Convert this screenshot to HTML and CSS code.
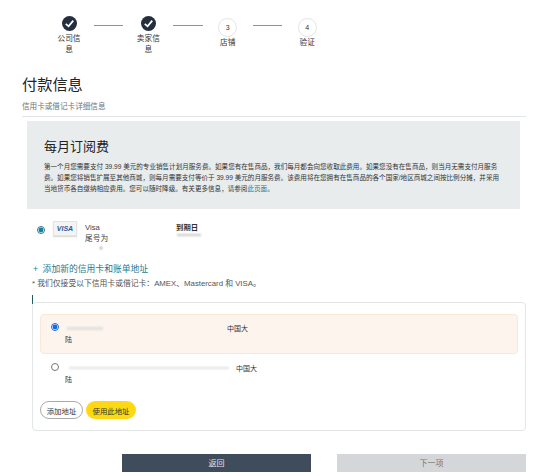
FILE: index.html
```html
<!DOCTYPE html>
<html lang="zh-CN">

<head>
    <meta charset="UTF-8">
    <meta name="viewport" content="width=device-width, initial-scale=1.0">
    <title>付款信息</title>
    <link rel="stylesheet" href="styles.css">
</head>

<body>
    <main class="page">
        <!-- 步骤条 -->
        <ol class="stepper">
            <li class="step">
                <span class="step-dot done">
                    <svg viewBox="0 0 16 16" width="15" height="15" aria-hidden="true"><path d="M4 8.4 7 11l5-6" fill="none" stroke="#fff" stroke-width="1.9"/></svg>
                </span>
                <span class="step-name">公司信息</span>
            </li>
            <li class="step-line"></li>
            <li class="step">
                <span class="step-dot done">
                    <svg viewBox="0 0 16 16" width="15" height="15" aria-hidden="true"><path d="M4 8.4 7 11l5-6" fill="none" stroke="#fff" stroke-width="1.9"/></svg>
                </span>
                <span class="step-name">卖家信息</span>
            </li>
            <li class="step-line"></li>
            <li class="step">
                <span class="step-dot">3</span>
                <span class="step-name">店铺</span>
            </li>
            <li class="step-line"></li>
            <li class="step">
                <span class="step-dot">4</span>
                <span class="step-name">验证</span>
            </li>
        </ol>

        <h1 class="page-title">付款信息</h1>
        <p class="page-sub">信用卡或借记卡详细信息</p>

        <section class="fee-panel">
            <h2>每月订阅费</h2>
            <p>第一个月您需要支付 39.99 美元的专业销售计划月服务费。如果您有在售商品，我们每月都会向您收取此费用。如果您没有在售商品，则当月无需支付月服务费。如果您将销售扩展至其他商城，则每月需要支付等价于 39.99 美元的月服务费。该费用将在您拥有在售商品的各个国家/地区商城之间按比例分摊，并采用当地货币各自缴纳相应费用。您可以随时降级。有关更多信息，请参阅<a href="#">此页面</a>。</p>
        </section>

        <div class="card-row">
            <input class="card-radio" type="radio" name="card" checked>
            <span class="visa-badge">VISA</span>
            <div class="card-name">Visa<br>尾号为<i class="smudge smudge-dot"></i></div>
            <div class="card-exp"><b>到期日</b><i class="smudge smudge-exp"></i></div>
        </div>

        <a class="add-card" href="#">+ 添加新的信用卡和账单地址</a>
        <p class="card-note">* 我们仅接受以下信用卡或借记卡：AMEX、Mastercard 和 VISA。</p>
        <div class="cursor-tick"></div>

        <section class="address-box">
            <label class="address selected">
                <input type="radio" name="addr" checked>
                <span class="address-text"><i class="smudge smudge-a"></i><span class="gap-a">中国大</span><br>陆</span>
            </label>
            <label class="address">
                <input type="radio" name="addr">
                <span class="address-text"><i class="smudge smudge-b"></i><span class="gap-b">中国大</span><br>陆</span>
            </label>
            <div class="address-actions">
                <button class="btn-outline">添加地址</button>
                <button class="btn-yellow">使用此地址</button>
            </div>
        </section>

        <div class="footer-btns">
            <button class="btn-back">返回</button>
            <button class="btn-next">下一项</button>
        </div>
    </main>
</body>

</html>
```

FILE: styles.css
```css
* {
    margin: 0;
    padding: 0;
    box-sizing: border-box;
    font-family: 'Liberation Sans', 'Noto Sans CJK SC', sans-serif;
}

body {
    background-color: #fff;
    color: #333;
    width: 558px;
    height: 476px;
    overflow: hidden;
}

.page {
    padding: 15px 32px 0 22px;
}

/* stepper */
.stepper {
    display: flex;
    list-style: none;
    padding-left: 32px;
    height: 45px;
}

.step {
    width: 30px;
    display: flex;
    flex-direction: column;
    align-items: center;
    text-align: center;
}

.step-dot {
    width: 19px;
    height: 19px;
    border: 1px solid #e3e6e6;
    border-radius: 50%;
    display: flex;
    align-items: center;
    justify-content: center;
    font-size: 7px;
    color: #333;
    margin-top: 3px;
}

.step-dot.done {
    width: 15px;
    height: 15px;
    margin-top: 1px;
    margin-bottom: 2px;
    background-color: #232f3e;
    border: none;
}

.step-name {
    font-size: 7.7px;
    line-height: 11px;
    color: #333;
}

.step-line {
    width: 29.4px;
    height: 1px;
    background-color: #8b9298;
    margin: 10px 10px 0 10px;
}

/* heading */
.page-title {
    font-size: 15.2px;
    font-weight: 400;
    line-height: 20px;
    color: #222;
    margin-top: 15px;
}

.page-sub {
    font-size: 7.6px;
    line-height: 11px;
    color: #6f7373;
    margin-top: 6px;
    padding-bottom: 4px;
    border-bottom: 1px solid #e3e3ee;
}

.fee-panel {
    margin: 4px 0 0 5px;
    width: 493px;
    height: 88px;
    background-color: #e8eced;
    padding: 18px 16.5px 0 17px;
}

.fee-panel h2 {
    font-size: 13px;
    font-weight: 400;
    line-height: 16px;
    color: #222;
}

.fee-panel p {
    font-size: 6.57px;
    line-height: 11px;
    color: #333;
    margin-top: 6px;
}

.fee-panel a {
    color: #1f7a8c;
    text-decoration: none;
}

/* saved card */
.card-row {
    display: flex;
    align-items: flex-start;
    margin: 12px 0 0 15px;
    height: 37px;
}

.card-radio {
    width: 8px;
    height: 8px;
    margin: 5px 8px 0 0;
    accent-color: #1f7a9c;
}

.visa-badge {
    width: 24px;
    height: 15px;
    background-color: #f4f4f4;
    border: 1px solid #e4e4e4;
    box-shadow: 0 1px 1px #ddd;
    color: #2a5a9a;
    font-size: 7px;
    font-weight: bold;
    font-style: italic;
    line-height: 13px;
    text-align: center;
}

.card-name {
    width: 91px;
    margin-left: 8px;
    padding-top: 1px;
    font-size: 7.7px;
    line-height: 11px;
    color: #444;
    position: relative;
}

.card-exp {
    padding-top: 2px;
    font-size: 7.4px;
    line-height: 10px;
    color: #333;
    position: relative;
}

.smudge {
    position: absolute;
    display: block;
    background-color: #c8c8c8;
    filter: blur(1px);
}

.smudge-dot {
    left: 15px;
    top: 26px;
    width: 2px;
    height: 2px;
    background-color: #888;
}

.smudge-exp {
    left: 1px;
    top: 13px;
    width: 24px;
    height: 2px;
}

.add-card {
    display: block;
    margin: 5px 0 0 11px;
    font-size: 8.8px;
    line-height: 13px;
    word-spacing: 2px;
    color: #1f7a8c;
    text-decoration: none;
}

.card-note {
    font-size: 7.8px;
    line-height: 11px;
    color: #555;
    margin: 2px 0 0 10px;
}

.cursor-tick {
    width: 1px;
    height: 9px;
    background-color: #1f5a60;
    margin: 6px 0 0 10px;
}

/* address box */
.address-box {
    width: 494px;
    height: 129px;
    margin: -2px 0 0 10px;
    border: 1px solid #e3e6e6;
    border-radius: 4px;
    padding: 11px 7px 0;
}

.address {
    display: flex;
    height: 40px;
    padding: 8px 10px 0 10px;
    border: 1px solid transparent;
    border-radius: 4px;
    font-size: 7px;
    color: #333;
}

.address.selected {
    background-color: #fcf4ed;
    border-color: #f9e8d8;
}

.address input {
    width: 8px;
    height: 8px;
    margin: 0 6px 0 0;
    accent-color: #1668e3;
}

.address-text {
    position: relative;
    line-height: 11px;
}

.gap-a {
    margin-left: 162px;
}

.gap-b {
    margin-left: 171px;
}

.smudge-a {
    left: 2px;
    top: 4px;
    width: 36px;
    height: 3px;
    background-color: #e2e0de;
}

.smudge-b {
    left: 4px;
    top: 4px;
    width: 160px;
    height: 2px;
    background-color: #e2e2e2;
}

.address-actions {
    display: flex;
    gap: 3px;
    margin-top: 7px;
}

.btn-outline,
.btn-yellow {
    height: 18px;
    border-radius: 9px;
    font-size: 7.4px;
    color: #333;
}

.btn-outline {
    width: 43px;
    background-color: #fff;
    border: 1px solid #aaa;
}

.btn-yellow {
    width: 50px;
    background-color: #ffd814;
    border: none;
}

/* footer */
.footer-btns {
    display: flex;
    margin: 23px 0 0 100px;
    gap: 26px;
}

.btn-back,
.btn-next {
    width: 189px;
    height: 17.5px;
    border: none;
    font-size: 8px;
}

.btn-back {
    background-color: #3f4c5c;
    color: #e4e6e8;
}

.btn-next {
    background-color: #d5d6da;
    color: #777;
}
```
